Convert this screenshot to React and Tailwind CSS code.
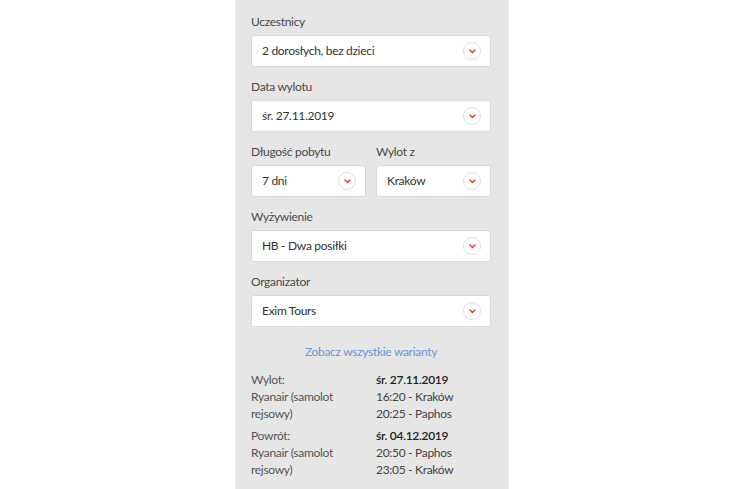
// search sidebar: offer options + flight details
const font = { fontFamily: 'Lato, "Open Sans", sans-serif' };

function Chevron() {
  return (
    <span className="w-[18px] h-[18px] rounded-full border border-[#dedede] bg-white flex items-center justify-center shrink-0">
      <svg width="7" height="5" viewBox="0 0 7 5">
        <path d="M1 1l2.5 2.5L6 1" fill="none" stroke="#e8472e" strokeWidth="1.6" strokeLinecap="round" strokeLinejoin="round" />
      </svg>
    </span>
  );
}

function Field({ label, value }) {
  return (
    <div>
      <div className="text-[12px] tracking-[-0.3px] leading-5 text-[#4a4a4a] mb-[3px]">{label}</div>
      <div className="h-8 bg-white border border-[#d9d9d9] rounded-[3px] flex items-center justify-between pl-[10px] pr-[9px]">
        <span className="text-[12px] tracking-[-0.3px] text-[#333]">{value}</span>
        <Chevron />
      </div>
    </div>
  );
}

const legs = [
  { label: 'Wylot:', date: 'śr. 27.11.2019', times: ['16:20 - Kraków', '20:25 - Paphos'] },
  { label: 'Powrót:', date: 'śr. 04.12.2019', times: ['20:50 - Paphos', '23:05 - Kraków'] },
];

export default function App() {
  return (
    <div className="w-full min-h-screen bg-white flex justify-center pl-2" style={font}>
      <div className="w-[274px] h-[489px] bg-[#e6e6e6] pl-4 pr-[18px] pt-3">
        <div className="flex flex-col gap-[10px]">
          <Field label="Uczestnicy" value="2 dorosłych, bez dzieci" />
          <Field label="Data wylotu" value="śr. 27.11.2019" />
          <div className="grid grid-cols-2 gap-[10px]">
            <Field label="Długość pobytu" value="7 dni" />
            <Field label="Wylot z" value="Kraków" />
          </div>
          <Field label="Wyżywienie" value="HB - Dwa posiłki" />
          <Field label="Organizator" value="Exim Tours" />
        </div>

        <div className="mt-[15px] text-center text-[12px] tracking-[-0.3px] leading-5 text-[#6b95d6]">
          Zobacz wszystkie warianty
        </div>

        <div className="mt-[9px] flex flex-col gap-[5px]">
          {legs.map((leg) => (
            <div key={leg.label} className="grid grid-cols-2 gap-[10px] text-[12px] tracking-[-0.3px] leading-[17px]">
              <div className="text-[#555]">
                <div>{leg.label}</div>
                <div>Ryanair (samolot rejsowy)</div>
              </div>
              <div className="text-[#444]">
                <div className="font-semibold text-[#222]">{leg.date}</div>
                {leg.times.map((t) => (
                  <div key={t}>{t}</div>
                ))}
              </div>
            </div>
          ))}
        </div>
      </div>
    </div>
  );
}
